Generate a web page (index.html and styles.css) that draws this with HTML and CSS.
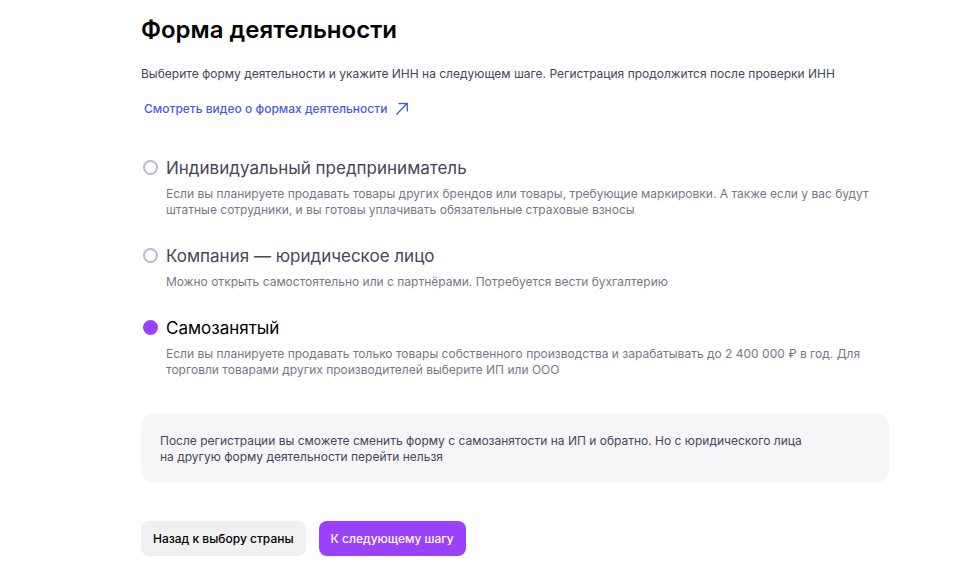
FILE: index.html
```html
<!DOCTYPE html>
<html lang="ru">

<head>
  <meta charset="utf-8">
  <meta name="viewport" content="width=device-width, initial-scale=1.0">
  <title>Форма деятельности</title>
  <link rel="stylesheet" href="styles.css">
</head>

<body>
  <form class="activity-form" name="activityForm">
    <h1>Форма деятельности</h1>
    <p class="intro">Выберите форму деятельности и укажите ИНН на следующем шаге. Регистрация продолжится после проверки ИНН</p>
    <a class="video-link" href="#">
      Смотреть видео о формах деятельности
      <svg width="14" height="14" viewBox="0 0 14 14" fill="none" stroke="currentColor" stroke-width="1.3" aria-hidden="true">
        <path d="M1.5 12.5L12 1.5M3.5 1.5H12.3V9.5" />
      </svg>
    </a>

    <div class="options">
      <div class="option">
        <input type="radio" id="ip" name="activity" value="ip">
        <div class="option-text">
          <label for="ip">Индивидуальный предприниматель</label>
          <p>Если вы планируете продавать товары других брендов или товары, требующие маркировки. А также если у вас будут<br>штатные сотрудники, и вы готовы уплачивать обязательные страховые взносы</p>
        </div>
      </div>

      <div class="option">
        <input type="radio" id="company" name="activity" value="company">
        <div class="option-text">
          <label for="company">Компания — юридическое лицо</label>
          <p>Можно открыть самостоятельно или с партнёрами. Потребуется вести бухгалтерию</p>
        </div>
      </div>

      <div class="option">
        <input type="radio" id="self" name="activity" value="self" checked>
        <div class="option-text">
          <label for="self">Самозанятый</label>
          <p>Если вы планируете продавать только товары собственного производства и зарабатывать до 2 400 000 ₽ в год. Для<br>торговли товарами других производителей выберите ИП или ООО</p>
        </div>
      </div>
    </div>

    <div class="note">После регистрации вы сможете сменить форму с самозанятости на ИП и обратно. Но с юридического лица<br>на другую форму деятельности перейти нельзя</div>

    <div class="buttons">
      <button type="button" class="back">Назад к выбору страны</button>
      <button type="submit" class="next">К следующему шагу</button>
    </div>
  </form>
</body>

</html>
```

FILE: styles.css
```css
* {
  box-sizing: border-box;
}

body {
  margin: 0;
  padding: 14px 72px 14px 141px;
  background: #fff;
  color: #47465a;
  font-family: Inter, "Noto Sans", sans-serif;
  font-size: 12px;
  line-height: 16px;
}

.activity-form {
  max-width: 748px;
}

h1 {
  margin: 0;
  color: #000;
  font-size: 24px;
  font-weight: 600;
  line-height: 32px;
}

p {
  margin: 0;
}

.intro {
  margin-top: 20px;
}

.video-link {
  display: inline-flex;
  align-items: center;
  gap: 8px;
  margin: 19px 0 0 3px;
  color: #4a5bdc;
  font-weight: 500;
  text-decoration: none;
}

.options {
  display: flex;
  flex-direction: column;
  gap: 26px;
  margin-top: 39px;
}

.option {
  display: flex;
  gap: 8px;
  padding-left: 2px;
}

.option input {
  appearance: none;
  flex: none;
  width: 15px;
  height: 15px;
  margin: 4px 0 0;
  border: 2px solid #bab7cf;
  border-radius: 50%;
}

.option input:checked {
  border-color: #9a41fe;
  background: #9a41fe;
}

.option label {
  display: block;
  font-size: 17px;
  line-height: 24px;
}

.option input:checked + .option-text label {
  color: #000;
}

.option p {
  margin-top: 6px;
  color: #797786;
}

.note {
  margin-top: 35px;
  padding: 20px 19px 18px;
  border-radius: 14px;
  background: #f6f6f9;
}

.buttons {
  display: flex;
  gap: 13px;
  margin-top: 38px;
}

.buttons button {
  padding: 9px 12px;
  border: 0;
  border-radius: 8px;
  font: inherit;
  font-weight: 500;
  line-height: 17px;
}

.back {
  background: #f0f0f0;
  color: #000;
}

.next {
  background: #9a41fe;
  color: #fff;
}
```
